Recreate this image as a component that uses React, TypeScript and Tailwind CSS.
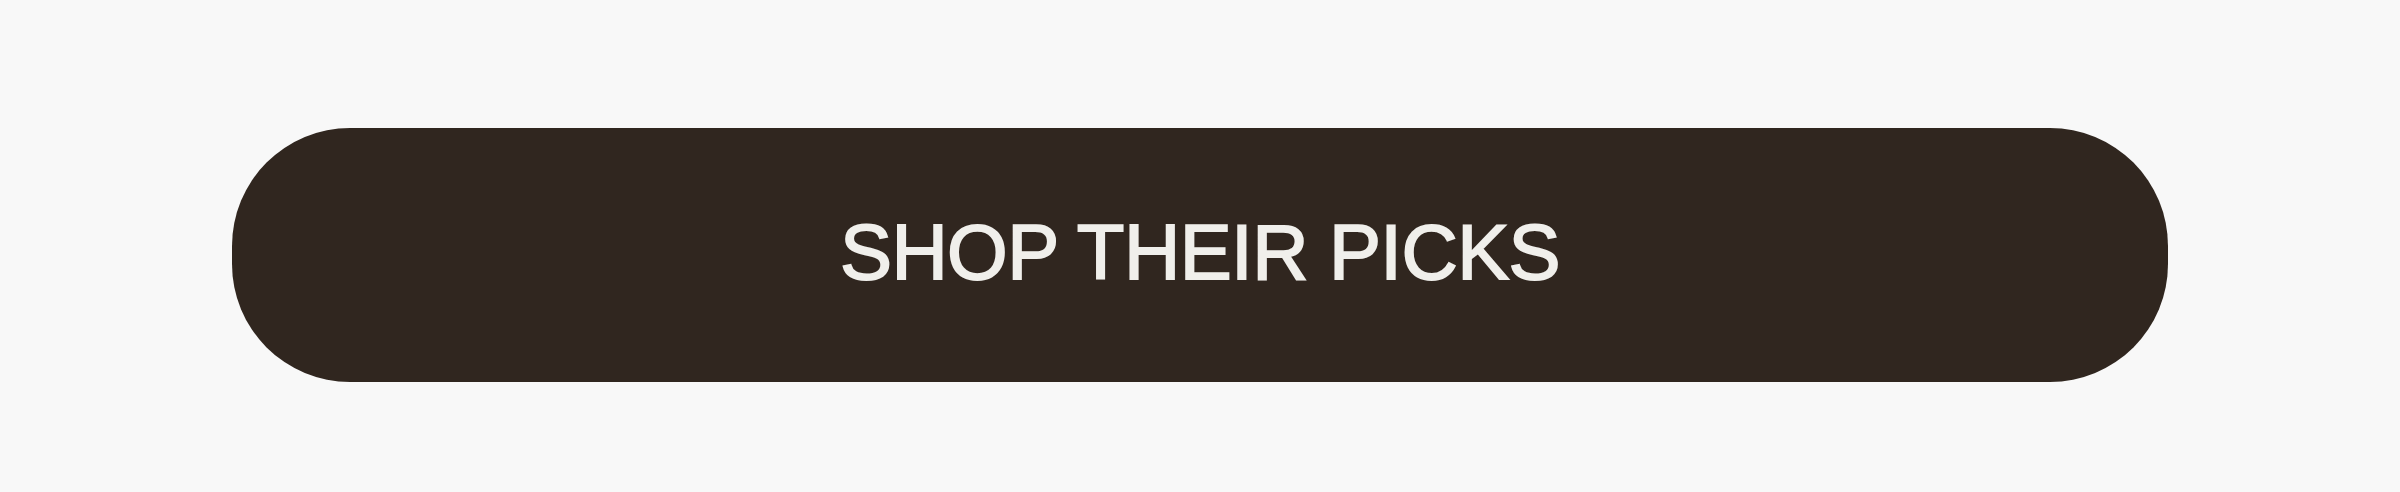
export default function App() {
  return (
    <div className="w-full h-[492px] bg-[#f8f8f8] px-[232px] pt-[128px]" style={{ fontFamily: '"Liberation Sans", Arial, sans-serif' }}>
      <button className="w-full h-[254px] rounded-[118px] bg-[#30261f] flex items-center justify-center">
        <span className="block text-[78px] leading-none tracking-[-0.6px] text-[#f0efeb] [-webkit-text-stroke:1.8px_#f0efeb] whitespace-nowrap pb-[6px]">
          SHOP THEIR PICKS
        </span>
      </button>
    </div>
  );
}
